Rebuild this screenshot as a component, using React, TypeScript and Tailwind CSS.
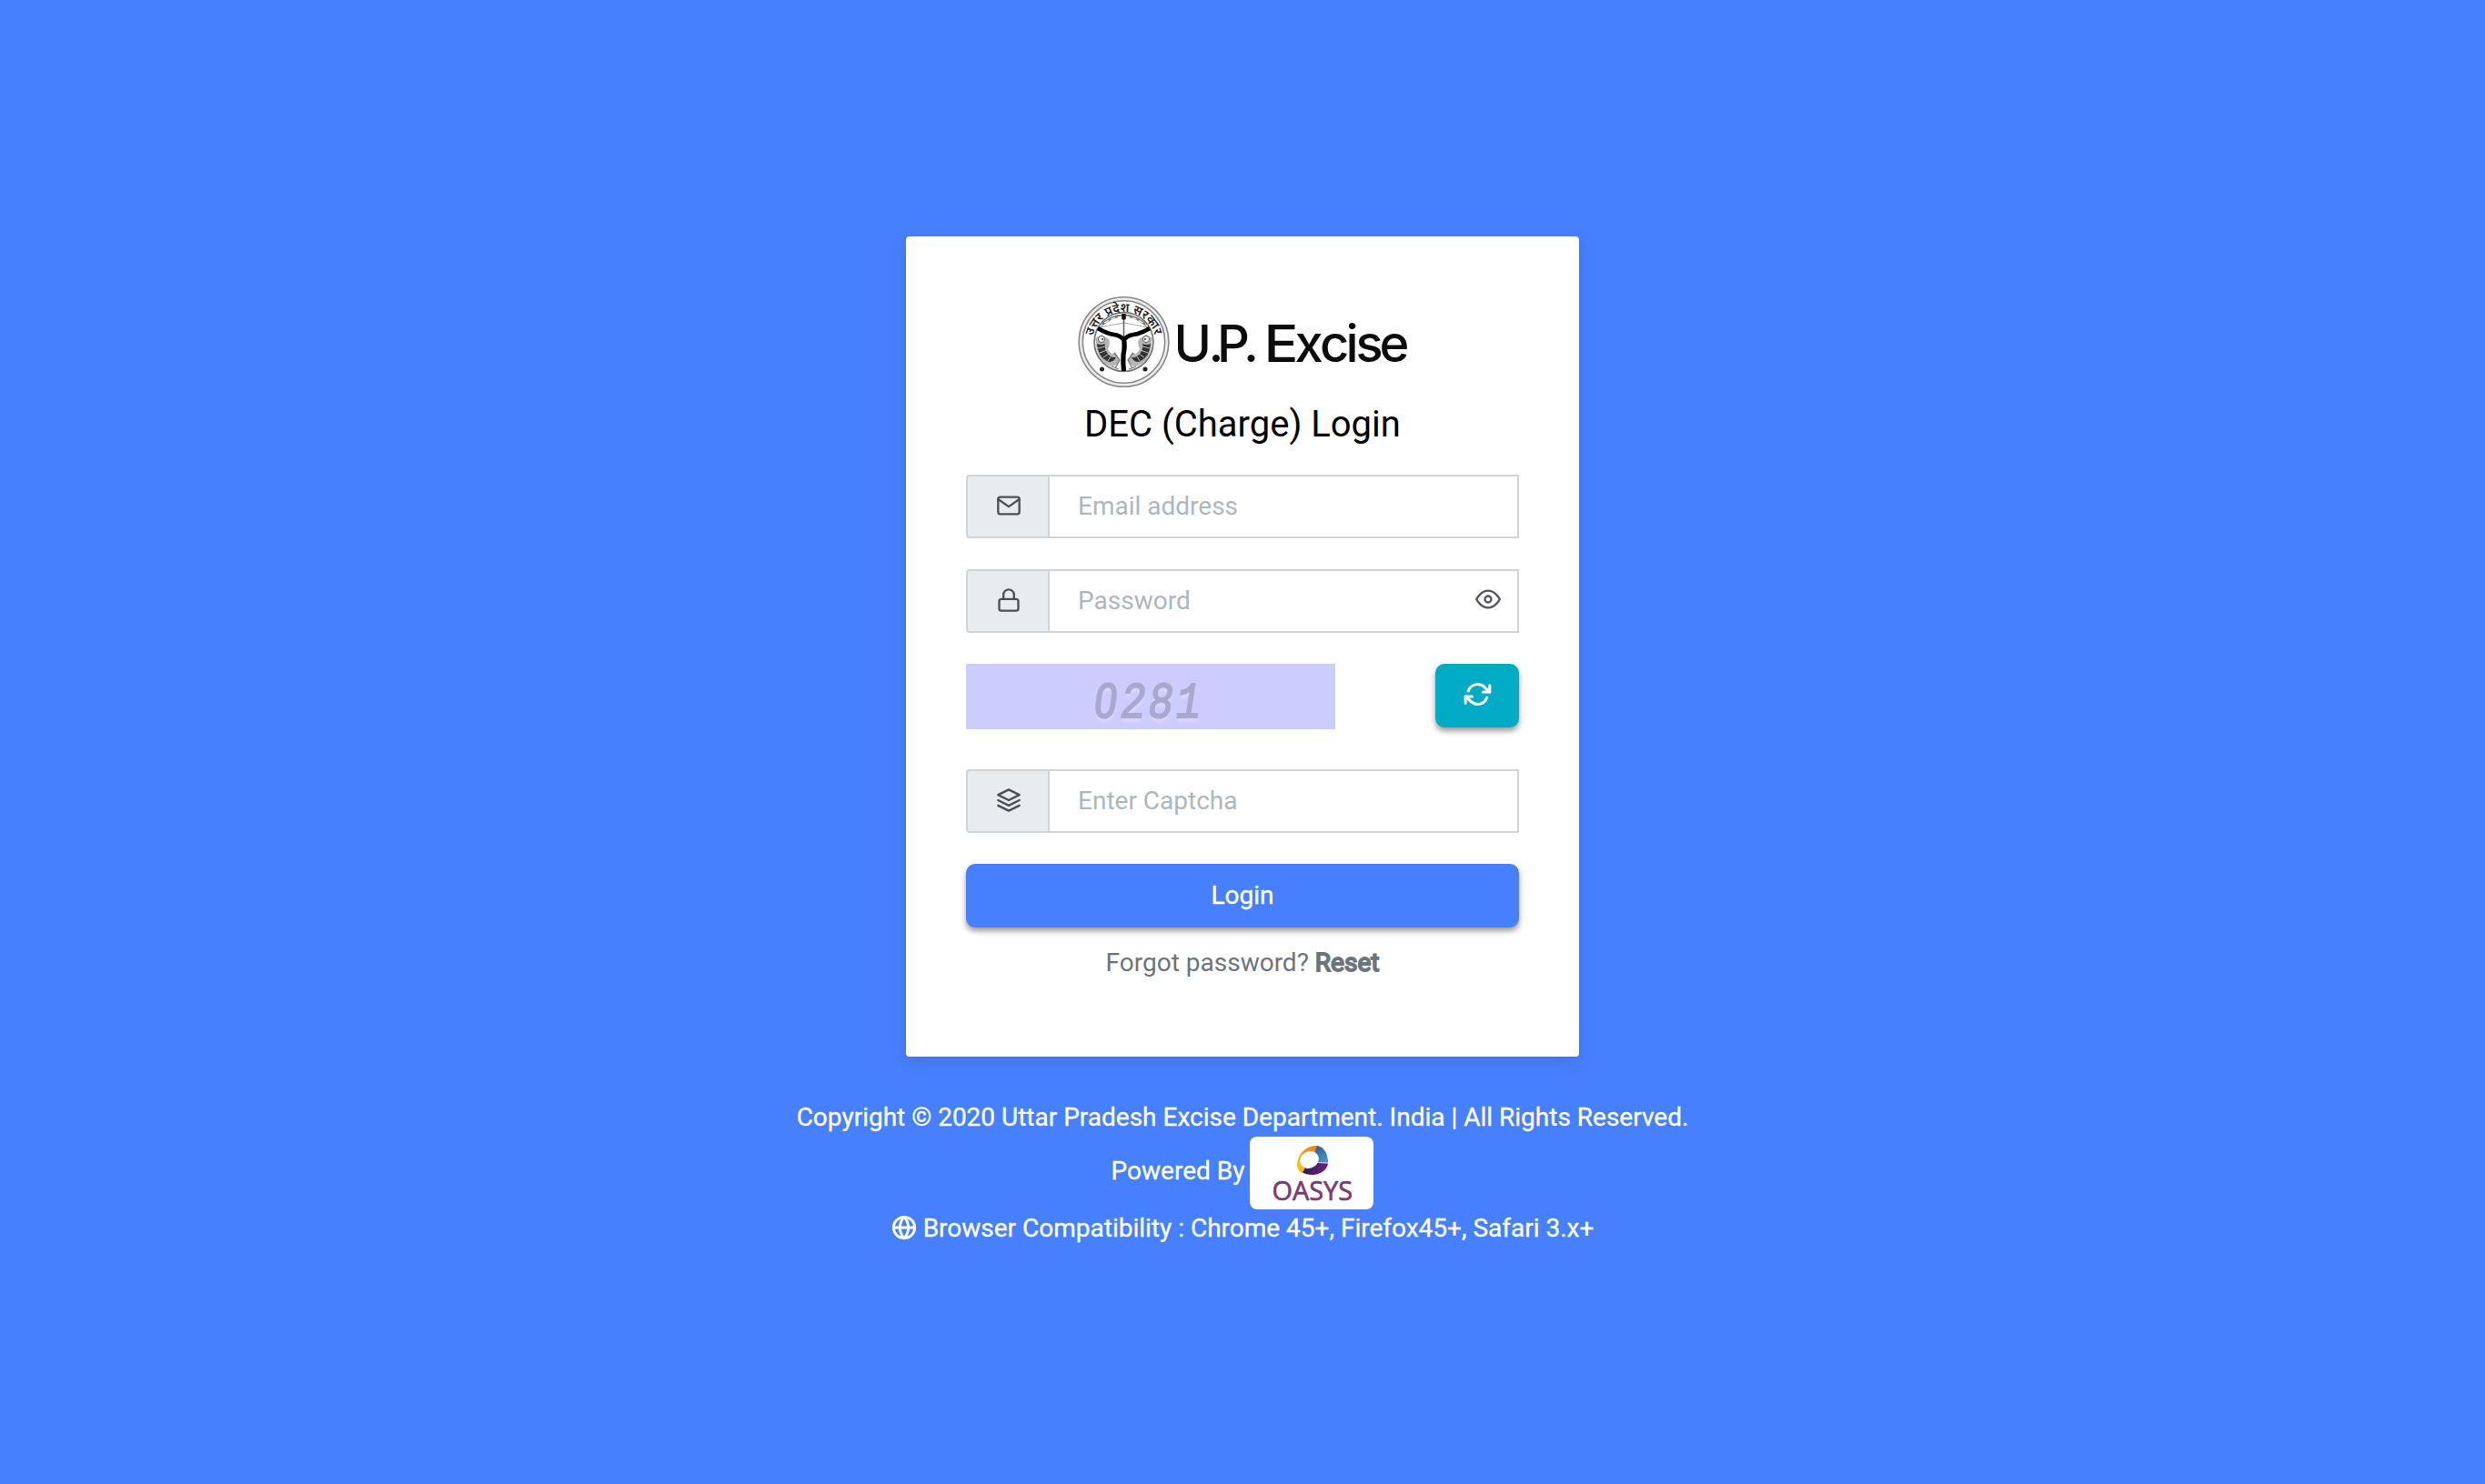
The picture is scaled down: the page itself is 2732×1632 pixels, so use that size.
import React from "react";
import { FiEye, FiGlobe, FiLayers, FiLock, FiMail, FiRefreshCw } from "react-icons/fi";

function Emblem() {
  return (
    <g transform="translate(-1 0)">
      <g fill="none" stroke="#8a8a8a">
        <circle cx="50.5" cy="50" r="47.6" stroke="#ececec" strokeWidth="4" />
        <circle cx="50.5" cy="50" r="49.3" strokeWidth="1.6" />
        <circle cx="50.5" cy="50" r="45.2" strokeWidth="1.6" />
        <circle cx="50.5" cy="50" r="32.4" strokeWidth="1.8" stroke="#777" />
      </g>
      <path id="emblem-arc" d="M16.5 43.5 A35 35 0 0 1 84.5 43.5" fill="none" />
      <text fontFamily='"Noto Sans", sans-serif' fontSize="13.5" fontWeight="600" fill="#222">
        <textPath href="#emblem-arc" startOffset="0" textLength="92">उत्तर प्रदेश सरकार</textPath>
      </text>
      {/* bow, string and arrow */}
      <path d="M23 34 Q50.5 8 78 34" fill="none" stroke="#777" strokeWidth="3" />
      <path d="M23 34 Q50.5 10 78 34" fill="none" stroke="#fff" strokeWidth="1.2" strokeDasharray="5 3" />
      <path d="M24 34 L50.5 29 L77 34 M25 36 L50.5 44 L76 36" fill="none" stroke="#aaa" strokeWidth="1" />
      <path d="M50.5 22V46" stroke="#666" strokeWidth="1.6" />
      <rect x="48.2" y="19" width="4.6" height="6.5" rx="1" fill="#111" />
      {/* fish */}
      <g id="emblem-fish">
        <path d="M20 50 Q20 68 34 76 Q42 79 46 70 L41 61 Q37 66 33 58 Q36 52 34 47 L26 42 L19 46Z" fill="#b5b5b5" />
        <path d="M21 52 Q22 66 32 71 Q38 74 42 67 Q35 68 31 60 Q29 55 30 52 Q25 54 21 52Z" fill="#333" />
        <path d="M22 57l8 -2M24 62l8 -3M28 67l6 -4M33 71l3 -5" stroke="#c8c8c8" strokeWidth="0.9" />
        <circle cx="26" cy="47" r="3.6" fill="#eee" stroke="#666" strokeWidth="1" />
        <circle cx="27" cy="47" r="1" fill="#333" />
        <path d="M40 62 L46 70 L41 79 M37 77 L45 80" stroke="#777" strokeWidth="1.3" fill="none" />
      </g>
      <use href="#emblem-fish" transform="translate(101 0) scale(-1 1)" />
      {/* confluence of rivers */}
      <path
        d="M22 35 Q32 41 40 42 Q47 43 50.5 48 Q54 43 61 42 Q69 41 79 35"
        fill="none"
        stroke="#000"
        strokeWidth="4.6"
      />
      <path d="M50.5 46 Q52 56 50 64 Q49.5 74 50.5 82" fill="none" stroke="#000" strokeWidth="5.2" />
      <circle cx="26.5" cy="80" r="2.5" fill="#222" />
      <circle cx="74" cy="80" r="2.5" fill="#222" />
    </g>
  );
}

function Logo() {
  return (
    <svg width="364" height="100" viewBox="0 0 364 100" className="block translate-x-[2px] overflow-visible">
      <Emblem />
      <g fontFamily="Inter, sans-serif" fontSize="56" fontWeight="500" fill="#0c0c0c">
        <text y="72" x="104.5 142.5 152 181">
          U.P.
        </text>
        <text y="72" x="203.5" textLength="38" lengthAdjust="spacingAndGlyphs">
          E
        </text>
        <text y="72" x="237.5 265 293.5 304.5 330.5">
          xcise
        </text>
      </g>
    </svg>
  );
}

function OasysLogo() {
  return (
    <svg width="136" height="80" viewBox="0 0 136 80" className="block rounded-[8px] bg-white">
      <defs>
        <linearGradient id="oasys-gold" x1="0" y1="1" x2="1" y2="0">
          <stop offset="0.2" stopColor="#f9bd14" />
          <stop offset="1" stopColor="#ec7a23" />
        </linearGradient>
        <linearGradient id="oasys-blue" x1="0" y1="0" x2="0.6" y2="1">
          <stop offset="0" stopColor="#2e5796" />
          <stop offset="1" stopColor="#4b93c4" />
        </linearGradient>
        <linearGradient id="oasys-purple" x1="0" y1="0" x2="1" y2="0">
          <stop offset="0" stopColor="#2e1a5e" />
          <stop offset="1" stopColor="#75217c" />
        </linearGradient>
      </defs>
      <path d="M74 10 C62 9 52 20 52 31 C52 36 55 39 58 40 L62 33 L74 17Z" fill="url(#oasys-gold)" />
      <path d="M74 10 C81 11 86 18 86 28.5 H72 V16Z" fill="url(#oasys-blue)" />
      <path d="M86 29.5 C85 37 77 42 69 42 C64 42 61 41 58 39.5 L61 34 L75 29Z" fill="url(#oasys-purple)" />
      <ellipse cx="65.5" cy="25.5" rx="10.6" ry="9.2" transform="rotate(-28 65.5 25.5)" fill="#fff" />
      <text
        x="24.5"
        y="70"
        fontFamily='"Open Sans", sans-serif'
        fontSize="29.5"
        fill="#7b3a76"
        stroke="#7b3a76"
        strokeWidth="0.7"
        textLength="88.5"
        lengthAdjust="spacingAndGlyphs"
      >
        OASYS
      </text>
    </svg>
  );
}

function Field({
  icon,
  placeholder,
  type = "text",
  trailing,
}: {
  icon: React.ReactNode;
  placeholder: string;
  type?: string;
  trailing?: React.ReactNode;
}) {
  return (
    <div className="relative flex h-[70px]">
      <span className="flex w-[92px] shrink-0 items-center justify-center rounded-l-[4px] border-2 border-[#ced4da] bg-[#e9ecef] pb-[3px] pl-px text-[#495057]">
        {icon}
      </span>
      <input
        type={type}
        placeholder={placeholder}
        className="h-full min-w-0 flex-1 border-2 border-l-0 border-[#ced4da] bg-white pr-8 pb-[2px] pl-[31px] text-[28px] text-[#495057] outline-none placeholder:text-[#adb7be] placeholder:opacity-100"
      />
      {trailing}
    </div>
  );
}

export default function App() {
  return (
    <main className="flex h-[1632px] w-full flex-col items-center bg-[#4680ff] pt-[260px] font-[Roboto,sans-serif] text-[28px] leading-[42px]">
      <section className="flex h-[902px] w-[740px] flex-col rounded-[4px] bg-white px-[66px] pt-[66px] shadow-[0_4px_16px_0_rgba(69,90,100,0.3)]">
        <div className="flex justify-center">
          <Logo />
        </div>
        <h4 className="mt-[17px] mb-[31px] text-center text-[40px] leading-[48px] text-black">DEC (Charge) Login</h4>
        <form className="flex flex-col" onSubmit={(e) => e.preventDefault()}>
          <Field icon={<FiMail size={28} />} placeholder="Email address" />
          <div className="mt-[34px]">
            <Field
              icon={<FiLock size={28} />}
              placeholder="Password"
              type="password"
              trailing={
                <button type="button" className="absolute top-[19px] right-[20px] text-[#545766]" aria-label="Show password">
                  <FiEye size={28} />
                </button>
              }
            />
          </div>
          <div className="mt-[34px] flex items-start justify-between">
            <div className="flex h-[72px] w-[406px] items-center justify-center bg-[#ccccff] pt-[14px] pr-[8px]">
              <span className="flex scale-x-[0.92] items-baseline font-['Liberation_Mono',monospace] text-[55px] leading-[60px] text-[#a9a9cf] italic [-webkit-text-stroke:2px_#a9a9cf] [text-shadow:0_5px_3px_rgba(230,220,255,0.7)]">
                <span className="inline-block w-[33px] text-center font-[Roboto,sans-serif] text-[51px]">0</span>
                <span className="inline-block w-[33px] scale-x-90">2</span>
                <span className="inline-block w-[33px] scale-x-90">8</span>
                <span className="inline-block w-[33px] scale-x-90">1</span>
              </span>
            </div>
            <button
              type="button"
              aria-label="Refresh captcha"
              className="flex h-[70px] w-[92px] items-center justify-center rounded-[10px] bg-[#00acc5] pb-[3px] text-white shadow-[0_4px_6px_0_rgba(0,0,0,0.4)]"
            >
              <FiRefreshCw size={29} strokeWidth={2.5} className="overflow-visible" />
            </button>
          </div>
          <div className="mt-[44px]">
            <Field icon={<FiLayers size={28} />} placeholder="Enter Captcha" />
          </div>
          <button
            type="submit"
            className="mt-[34px] h-[70px] rounded-[10px] bg-[#4680ff] text-[28px] text-white shadow-[0_4px_6px_0_rgba(0,0,0,0.4)] [-webkit-text-stroke:0.3px_white]"
          >
            Login
          </button>
        </form>
        <p className="mt-[18px] text-center text-[#6c757d]">
          Forgot password? <a className="[-webkit-text-stroke:1.8px_#6c757d]">Reset</a>
        </p>
      </section>
      <footer className="flex flex-col items-center pt-[46px] text-white [-webkit-text-stroke:0.3px_white]">
        <p>Copyright © 2020 Uttar Pradesh Excise Department. India | All Rights Reserved.</p>
        <div className="flex items-center gap-[6px]">
          <span className="pb-[5px]">Powered By</span>
          <OasysLogo />
        </div>
        <p className="flex items-center gap-[7px]">
          <FiGlobe size={28} strokeWidth={2.5} className="mb-[2px]" />
          <span>Browser Compatibility : Chrome 45+, Firefox45+, Safari 3.x+</span>
        </p>
      </footer>
    </main>
  );
}
